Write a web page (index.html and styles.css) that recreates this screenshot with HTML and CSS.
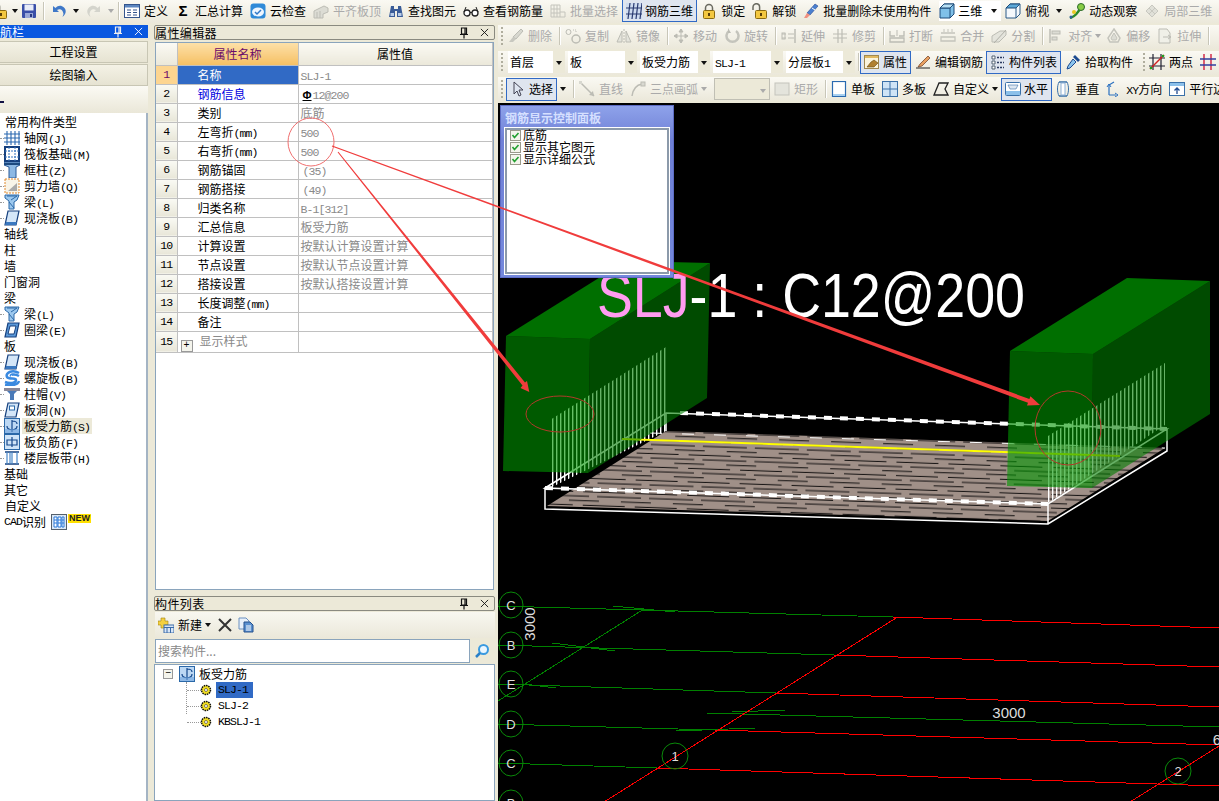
FILE: index.html
```html
<!DOCTYPE html>
<html lang="zh-CN">
<head>
<meta charset="utf-8">
<title>钢筋三维</title>
<link rel="stylesheet" href="styles.css">
</head>
<body>
<svg class="sprite" aria-hidden="true">
  <symbol id="save" viewBox="0 0 16 16"><rect x="1" y="1" width="14" height="14" rx="1" fill="#3a4fa8"/><rect x="3.500" y="1.500" width="9" height="6" fill="#e8ecf8"/><rect x="4" y="10" width="8" height="5" fill="#9aa8d8"/><rect x="9" y="11" width="2" height="3" fill="#2a3a80"/></symbol>
  <symbol id="undo" viewBox="0 0 16 16"><path d="M2 3v6h6L6 7c3-2 6-.5 6.500 4l-1 3c4-3 4-7 1.500-9.500C10 2 7 2.500 4.500 5z" fill="#3f78c8"/></symbol>
  <symbol id="redo" viewBox="0 0 16 16"><path d="M14 3v6H8l2-2C7 5 4 6.500 3.500 11l1 3C.5 11 .5 7 3 4.500 6 2 9 2.500 11.500 5z" fill="#d4d4cc"/></symbol>
  <symbol id="define" viewBox="0 0 16 16"><rect x=".5" y="1.500" width="15" height="13" fill="#fff" stroke="#34558c"/><rect x="1" y="2" width="14" height="2.500" fill="#5c86c0"/><path d="M3 7h4M3 9.500h4M3 12h4M9 7h4M9 9.500h4M9 12h4" stroke="#34558c"/></symbol>
  <symbol id="cloud" viewBox="0 0 16 16"><rect x=".5" y=".5" width="15" height="15" rx="3" fill="#2f8ad8"/><ellipse cx="8" cy="9" rx="6" ry="4.500" fill="#eef6ff"/><path d="M5 9l2 2 4-4" stroke="#2f78c8" stroke-width="1.500" fill="none"/></symbol>
  <symbol id="flat" viewBox="0 0 16 16"><path d="M1 15V8l10-5 4 2v4l-5 2v4z" fill="#dcdcd4" stroke="#bcbcb4"/><path d="M4 15V9M7 15V8" stroke="#bcbcb4"/></symbol>
  <symbol id="binoc" viewBox="0 0 16 16"><path d="M3 3h3v3h4V3h3l2 11H9V8H7v6H1z" fill="#3a5c98"/><rect x="2.500" y="10" width="3.500" height="3" fill="#b8cce8"/><rect x="10" y="10" width="3.500" height="3" fill="#b8cce8"/></symbol>
  <symbol id="glasses" viewBox="0 0 16 16"><circle cx="4" cy="10" r="3" fill="#fff" stroke="#222" stroke-width="1.300"/><circle cx="12" cy="10" r="3" fill="#fff" stroke="#222" stroke-width="1.300"/><path d="M7 9.500h2M1 9l2-5M15 9l-2-5" stroke="#222"/></symbol>
  <symbol id="batch" viewBox="0 0 16 16"><path d="M1 2h9v12H1zM4 2v12M7 2v12M1 6h9M1 10h9M10 9h5v5h-5" fill="none" stroke="#c4c4bc"/></symbol>
  <symbol id="rebar" viewBox="0 0 16 16"><rect width="16" height="16" fill="#cfdcf0"/><path d="M4 0l-2 16M8 0L6 16M12 0l-2 16M16 0l-2 16" stroke="#2a3a70" stroke-width="1.200"/><path d="M0 5h16M0 11h16" stroke="#2a3a70" stroke-width="1.200"/></symbol>
  <symbol id="lock" viewBox="0 0 16 16"><path d="M4.500 8V5a3.500 3.500 0 0 1 7 0v3" fill="none" stroke="#6a6a60" stroke-width="1.500"/><rect x="2.500" y="7.500" width="11" height="8" rx="1" fill="#f4c840" stroke="#8a6a10"/><rect x="7" y="10" width="2" height="3" fill="#5a4008"/></symbol>
  <symbol id="unlock" viewBox="0 0 16 16"><path d="M1 7V4a3.300 3.300 0 0 1 6.600 0v3" fill="none" stroke="#6a6a60" stroke-width="1.500"/><rect x="3.500" y="7.500" width="11" height="8" rx="1" fill="#f4c840" stroke="#8a6a10"/><rect x="8" y="10" width="2" height="3" fill="#5a4008"/></symbol>
  <symbol id="brush" viewBox="0 0 16 16"><path d="M12 1l3 2-8 9-3-2z" fill="#4a80d0" stroke="#2a4a90" stroke-width=".6"/><path d="M4 10l3 2-3 3H1z" fill="#f09080"/><path d="M9 5l3 2" stroke="#fff"/></symbol>
  <symbol id="cube" viewBox="0 0 16 16"><path d="M1 5l4-4h10v10l-4 4H1z" fill="#7fc0e8" stroke="#1c4a78"/><path d="M1 5h10v10M11 5l4-4" fill="none" stroke="#1c4a78"/><path d="M5 1h10l-4 4H1z" fill="#b8e0f4" stroke="#1c4a78"/></symbol>
  <symbol id="cubew" viewBox="0 0 16 16"><path d="M1 5l4-4h10v10l-4 4H1z" fill="#f4f8fc" stroke="#2a5a88"/><path d="M5 1h10l-4 4H1z" fill="#5ca8d8" stroke="#1c4a78"/><path d="M11 5v10M11 5l4-4" stroke="#2a5a88"/></symbol>
  <symbol id="orbit" viewBox="0 0 16 16"><path d="M1 15c4-1 8-5 11-11" stroke="#2a8a2a" stroke-width="2.500" fill="none"/><circle cx="12" cy="4" r="3.500" fill="#88cc44" stroke="#2a6a2a"/><circle cx="5" cy="9" r="2" fill="#e8c820"/><circle cx="2" cy="14" r="1.500" fill="#3060a0"/></symbol>
  <symbol id="part" viewBox="0 0 16 16"><path d="M2 8l6-6 6 6-6 6z" fill="#e0e0d8" stroke="#c8c8c0"/><path d="M5 5l6 6M11 5l-6 6" stroke="#c8c8c0"/></symbol>
  <symbol id="del" viewBox="0 0 16 16"><path d="M13 1l2 2-7 8-3-2z" fill="#d8d8d0" stroke="#bcbcb4"/><path d="M5 9l3 2-3 3H1z" fill="#c8c8c0"/></symbol>
  <symbol id="copy" viewBox="0 0 16 16"><circle cx="3.500" cy="4" r="2.500" fill="none" stroke="#bcbcb4"/><circle cx="11" cy="11" r="4" fill="none" stroke="#bcbcb4" stroke-width="1.500"/><path d="M8 2h3v3" fill="none" stroke="#bcbcb4" stroke-dasharray="1 1"/></symbol>
  <symbol id="mirror" viewBox="0 0 16 16"><path d="M8 1v14" stroke="#bcbcb4" stroke-dasharray="2 1"/><path d="M6 3v11H1zM10 3v11h5z" fill="#e4e4dc" stroke="#bcbcb4"/></symbol>
  <symbol id="move" viewBox="0 0 16 16"><path d="M8 1v14M1 8h14M8 1L6 4h4zM8 15l-2-3h4zM1 8l3-2v4zM15 8l-3-2v4z" stroke="#bcbcb4" fill="#bcbcb4"/></symbol>
  <symbol id="rotate" viewBox="0 0 16 16"><path d="M5 3a6 6 0 1 0 7 0" fill="none" stroke="#c4c4bc" stroke-width="2.500"/><path d="M4 0v5h3z" fill="#bcbcb4"/></symbol>
  <symbol id="extend" viewBox="0 0 16 16"><path d="M14 1v14" stroke="#bcbcb4" stroke-width="1.500"/><path d="M1 6h4M7 6h6M1 10h4M7 10h6" stroke="#bcbcb4"/><rect x="1" y="5" width="3" height="6" fill="none" stroke="#bcbcb4"/></symbol>
  <symbol id="trim" viewBox="0 0 16 16"><path d="M6 1v14M10 1v14" stroke="#bcbcb4" stroke-width="1.200"/><path d="M1 6h14M1 10h14" stroke="#bcbcb4"/></symbol>
  <symbol id="break" viewBox="0 0 16 16"><path d="M1 3v5h5M15 3v5h-5M1 10h14v4H1z" fill="none" stroke="#bcbcb4" stroke-width="1.300"/><path d="M8 2v6" stroke="#bcbcb4"/></symbol>
  <symbol id="merge" viewBox="0 0 16 16"><path d="M1 5h14M1 9h14v4H1z" fill="none" stroke="#c4c4bc" stroke-width="1.300"/><path d="M4 1v3M12 1v3M8 1v3" stroke="#c4c4bc"/></symbol>
  <symbol id="split" viewBox="0 0 16 16"><path d="M1 14V8l8-5h6v4l-7 7z" fill="#e4e4dc" stroke="#bcbcb4"/><path d="M3 15L15 2" stroke="#b0b0a8"/></symbol>
  <symbol id="align" viewBox="0 0 16 16"><path d="M2 1v14" stroke="#bcbcb4" stroke-width="1.500"/><rect x="4" y="3" width="8" height="3" fill="#dcdcd4" stroke="#bcbcb4"/><rect x="4" y="9" width="5" height="3" fill="#dcdcd4" stroke="#bcbcb4"/></symbol>
  <symbol id="offset" viewBox="0 0 16 16"><path d="M8 1l6 9-2 4H4l-2-4z" fill="none" stroke="#c4c4bc" stroke-width="1.500"/><path d="M8 5l3 5-1 2H6l-1-2z" fill="#dcdcd4" stroke="#c4c4bc"/></symbol>
  <symbol id="stretch" viewBox="0 0 16 16"><path d="M2 1h8l3 4v10H2z" fill="#f0f0e8" stroke="#bcbcb4"/><path d="M6 9h7M11 7l3 2-3 2" stroke="#bcbcb4" fill="none"/></symbol>
  <symbol id="prop" viewBox="0 0 16 16"><rect x=".5" y="1.500" width="14" height="13" fill="#fbf4dc" stroke="#a08850"/><rect x="1" y="2" width="13" height="2" fill="#e0b860"/><path d="M3 13l4-5 3-2 4 3-4 4z" fill="#b08030" stroke="#6a4a10" stroke-width=".6"/></symbol>
  <symbol id="edit" viewBox="0 0 16 16"><path d="M1 14h14" stroke="#222"/><path d="M3 13l2-3 8-8 2 2-8 8z" fill="#e8a060" stroke="#6a3a20" stroke-width=".7"/></symbol>
  <symbol id="list" viewBox="0 0 16 16"><path d="M2 2h3v3H2zM2 7h3v3H2zM2 12h3v3H2z" fill="#fff" stroke="#506070"/><path d="M7 3.500h7M7 8.500h7M7 13.500h7" stroke="#2a3a60" stroke-width="1.300" stroke-dasharray="2 1"/></symbol>
  <symbol id="pick" viewBox="0 0 16 16"><path d="M10 1l5 5-2 2-5-5z" fill="#1c4a90"/><path d="M8 5l3 3-6 6-3 1 1-3z" fill="#8cc4ec" stroke="#1c4a90"/></symbol>
  <symbol id="twopt" viewBox="0 0 16 16"><path d="M4 0v16M12 0v16M0 4h16M0 12h16" stroke="#223" stroke-width="1.200"/><path d="M1 15L15 1" stroke="#d02020" stroke-width="1.400"/><circle cx="2" cy="14" r="1.300" fill="#20a020"/><circle cx="14" cy="2" r="1.300" fill="#20a020"/></symbol>
  <symbol id="axis" viewBox="0 0 16 16"><path d="M4 0v16M11 0v16" stroke="#d02040" stroke-width="1.400"/><path d="M0 5h16M0 11h16" stroke="#3040a0" stroke-width="1.400"/></symbol>
  <symbol id="cursor" viewBox="0 0 16 16"><path d="M4 1v12l3-3 2 5 2-1-2-5h4z" fill="#dfe6f2" stroke="#445"/></symbol>
  <symbol id="line" viewBox="0 0 16 16"><path d="M1 1l14 14" stroke="#bcbcb4" stroke-width="1.500"/><rect y="0" width="3" height="3" fill="#d8d8d0"/><path d="M15 15l-5-1 4-4z" fill="#bcbcb4"/></symbol>
  <symbol id="arc" viewBox="0 0 16 16"><path d="M2 15C3 8 6 4 12 3" fill="none" stroke="#bcbcb4" stroke-width="1.500"/><rect x="11" y="1" width="4" height="4" fill="#d8d8d0" stroke="#bcbcb4"/></symbol>
  <symbol id="rect" viewBox="0 0 16 16"><rect x="1" y="2" width="14" height="12" fill="#e4e4dc" stroke="#c4c4bc"/></symbol>
  <symbol id="single" viewBox="0 0 16 16"><rect x="1.500" y=".5" width="13" height="15" fill="#fff" stroke="#2a6ab0" stroke-width="1.200"/><path d="M2 13h12v2H2z" fill="#a8d0f0"/></symbol>
  <symbol id="multi" viewBox="0 0 16 16"><rect x=".5" y=".5" width="15" height="15" fill="#cfe4f6" stroke="#3a70a8"/><path d="M8 0v16M0 8h16" stroke="#3a70a8"/></symbol>
  <symbol id="custom" viewBox="0 0 16 16"><path d="M1 14L6 2h9l-3 6 3 6z" fill="none" stroke="#222" stroke-width="1.300"/></symbol>
  <symbol id="horiz" viewBox="0 0 16 16"><rect x=".5" y="1.500" width="15" height="13" rx="1" fill="#fff" stroke="#3a70a8"/><path d="M1 10h14v4H1z" fill="#8cc0ea"/><path d="M3 4h10l-2 4H5z" fill="#dde6f0" stroke="#3a70a8" stroke-width=".6"/></symbol>
  <symbol id="vert" viewBox="0 0 16 16"><path d="M4 1h8M4 15h8" stroke="#3a70a8" stroke-width="1.500"/><path d="M4 1C2 5 2 11 4 15M12 1c2 4 2 10 0 14" fill="none" stroke="#3a70a8"/><rect x="6" y="2" width="4" height="12" fill="#fff" stroke="#8cb0d8"/></symbol>
  <symbol id="xy" viewBox="0 0 16 16"><path d="M3 14V4l5-3M3 14l7 0" fill="none" stroke="#2a70c0" stroke-width="1.200"/><path d="M1 6l2-3 2 3M9 12l3 2-3 2" fill="none" stroke="#2a70c0"/></symbol>
  <symbol id="par" viewBox="0 0 16 16"><rect x=".5" y="1.500" width="15" height="13" fill="#fff" stroke="#3a70a8"/><rect x="1" y="2" width="14" height="3" fill="#8cc0ea"/><path d="M8 13V7M5.500 9.500L8 7l2.500 2.500" stroke="#204a90" fill="none" stroke-width="1.300"/></symbol>
  <symbol id="n-grid" viewBox="0 0 16 16"><path d="M3 1v14M7 1v14M11 1v14M15 1v14M0 4h16M0 8h16M0 12h16" stroke="#2a68b0" stroke-width="1.100"/></symbol>
  <symbol id="n-raft" viewBox="0 0 16 16"><rect x="1" y="1" width="14" height="14" fill="#fff" stroke="#16407e" stroke-width="2"/><path d="M1 5h14M1 11h14M5 1v14M11 1v14" stroke="#3a78c0" stroke-dasharray="2 1"/></symbol>
  <symbol id="n-col" viewBox="0 0 16 16"><path d="M0 0h16v3l-4 2v11H5V5L0 3z" fill="#8cb8e4" stroke="#2a5a98"/><path d="M0 2h16" stroke="#1c4a80" stroke-width="2"/></symbol>
  <symbol id="n-wall" viewBox="0 0 16 16"><rect x="1" y="1" width="14" height="14" fill="#f8f4e8" stroke="#e08a30" stroke-dasharray="2 1"/><path d="M4 13l9-8v8z" fill="#aaa"/></symbol>
  <symbol id="n-beam" viewBox="0 0 16 16"><path d="M1 1h14l-2 5-3 2v7H5V7L1 4z" fill="#9cc8ee" stroke="#2a68a8"/><path d="M3 2l10 0-6 4M5 8l5 6" stroke="#2a68a8" fill="none"/></symbol>
  <symbol id="n-slab" viewBox="0 0 16 16"><path d="M4 1h11l-3 14H1z" fill="#d4e6f8" stroke="#16407e" stroke-width="1.200"/><path d="M1 15h11l1-3H2z" fill="#3a78c0"/></symbol>
  <symbol id="n-ring" viewBox="0 0 16 16"><path d="M4 1h11l-3 14H1z" fill="#5a98d8" stroke="#16407e" stroke-width="1.200"/><path d="M6 4h6l-2 8H4z" fill="#fff" stroke="#16407e"/></symbol>
  <symbol id="n-spiral" viewBox="0 0 16 16"><path d="M15 3C8-1 1 3 3 7c2 3 9 0 9 3s-6 4-11 2M15 6C10 3 6 5 7 6M1 15c6 1 13 0 14-4" fill="none" stroke="#3a8ae0" stroke-width="2.500"/></symbol>
  <symbol id="n-cap" viewBox="0 0 16 16"><rect y="2" width="16" height="3" fill="#889"/><path d="M3 5h10l-3 3v6H6V8z" fill="#4a7ab8"/></symbol>
  <symbol id="n-hole" viewBox="0 0 16 16"><path d="M4 1h11l-3 14H1z" fill="#d4e6f8" stroke="#16407e" stroke-width="1.200"/><rect x="5.500" y="4" width="5" height="4" fill="#fff" stroke="#2a68a8"/></symbol>
  <symbol id="n-bar" viewBox="0 0 16 16"><rect x=".5" y=".5" width="15" height="15" fill="#bcd8f4" stroke="#2a68a8"/><path d="M8 2v12M3 8c0 5 10 5 10 0M8 3c3 0 5 1 5 3" fill="none" stroke="#14488c" stroke-width="1.200"/><path d="M1 11h14v4H1z" fill="#6ea4dc" opacity=".6"/></symbol>
  <symbol id="n-neg" viewBox="0 0 16 16"><rect x=".5" y=".5" width="15" height="15" fill="#cfe4f8" stroke="#2a68a8"/><path d="M3 6h10v5H3zM8 3v10" fill="none" stroke="#14488c" stroke-width="1.200"/></symbol>
  <symbol id="n-band" viewBox="0 0 16 16"><path d="M1 2h14M1 14h14" stroke="#16407e" stroke-width="1.500"/><path d="M3 2v12M8 2v12M13 2v12M6 2v12" stroke="#4a88c8" stroke-width="1.200"/></symbol>
  <symbol id="n-cad" viewBox="0 0 16 16"><rect x=".5" y=".5" width="15" height="15" fill="#dbe8f6" stroke="#55606c"/><path d="M3 3h3v10H3zM7 3h3v10H7zM11 3h2v10h-2z" fill="#fff" stroke="#2a78d8"/><path d="M3 6h3M3 9h3M7 6h3M7 9h3M11 6h2M11 9h2" stroke="#2a78d8"/></symbol>
  <symbol id="pin" viewBox="0 0 10 12"><path d="M2.500 1h5v6h-5zM1 7.500h8M5 8v3.500M6 1v6" fill="none" stroke="#111" stroke-width="1.200"/></symbol>
  <symbol id="x" viewBox="0 0 10 10"><path d="M1 1l8 8M9 1L1 9" stroke="currentColor"/></symbol>
  <symbol id="plus" viewBox="0 0 16 16"><path d="M3 1h4v3h3v4H7v3H3V8H0V4h3z" fill="#f4d040" stroke="#a08010" stroke-width=".6"/><rect x="6" y="8" width="10" height="8" fill="#d8e6f6" stroke="#3a6aa8"/><path d="M6 10.500h10M9 11v5M12.500 11v5" stroke="#3a6aa8"/></symbol>
  <symbol id="cross" viewBox="0 0 16 16"><path d="M2 2l12 12M14 2L2 14" stroke="#333" stroke-width="2"/></symbol>
  <symbol id="dup" viewBox="0 0 16 16"><path d="M1 1h7l3 3v8H1z" fill="#e8f0fa" stroke="#6a90c0"/><path d="M6 5h6l3 3v7H6z" fill="#5a90d0" stroke="#24508c"/><path d="M8 9h5M8 11h5M8 13h5" stroke="#fff"/></symbol>
  <symbol id="search" viewBox="0 0 16 16"><circle cx="9.500" cy="6.500" r="4.500" fill="#eaf6ff" stroke="#3a9ae0" stroke-width="2"/><path d="M6 10l-4 4" stroke="#2a80c8" stroke-width="2.500"/></symbol>
  <symbol id="gear" viewBox="0 0 12 12"><circle cx="6" cy="6" r="4.500" fill="#f4e020" stroke="#111" stroke-width="1.500" stroke-dasharray="1.500 .8"/><circle cx="6" cy="6" r="1.500" fill="#fff" stroke="#333" stroke-width=".6"/></symbol>
  <symbol id="check" viewBox="0 0 11 11"><rect x=".5" y=".5" width="10" height="10" fill="#f4f4ec" stroke="#9a9a8c"/><path d="M2.500 5l2 2.500 4-4.500" fill="none" stroke="#22a030" stroke-width="1.600"/></symbol>
  <pattern id="hatch" width="52" height="13.500" patternUnits="userSpaceOnUse" patternTransform="rotate(2)"><rect width="52" height="13.500" fill="#a09088"/><path d="M0 2h34M42 2h10M14 6.500h30M28 11h24M0 11h18" stroke="#000" stroke-width=".9"/></pattern>
  <pattern id="bars" width="4" height="4" patternUnits="userSpaceOnUse"><rect width="1.400" height="4" fill="#fff"/></pattern>
</svg>

<div class="app">
  <header class="bar top">
    <svg class="ic clip"><use href="#unlock"/></svg><span class="caret g3"></span>
    <svg class="ic g6"><use href="#save"/></svg><i class="sep"></i>
    <svg class="ic undo"><use href="#undo"/></svg><span class="caret g7"></span>
    <svg class="ic redo"><use href="#redo"/></svg><span class="caret off g4"></span><i class="sep"></i>
    <div class="tool"><svg class="ic"><use href="#define"/></svg>定义</div>
    <div class="tool"><span class="sigma">Σ</span>汇总计算</div>
    <div class="tool"><svg class="ic"><use href="#cloud"/></svg>云检查</div>
    <div class="tool off"><svg class="ic"><use href="#flat"/></svg>平齐板顶</div>
    <div class="tool"><svg class="ic"><use href="#binoc"/></svg>查找图元</div>
    <div class="tool"><svg class="ic"><use href="#glasses"/></svg>查看钢筋量</div>
    <div class="tool off"><svg class="ic"><use href="#batch"/></svg>批量选择</div>
    <div class="tool on"><svg class="ic"><use href="#rebar"/></svg>钢筋三维</div>
    <div class="tool"><svg class="ic"><use href="#lock"/></svg>锁定</div>
    <div class="tool"><svg class="ic"><use href="#unlock"/></svg>解锁</div>
    <div class="tool"><svg class="ic"><use href="#brush"/></svg>批量删除未使用构件</div>
    <div class="view"><svg class="ic"><use href="#cube"/></svg>三维<span class="caret"></span></div>
    <div class="tool"><svg class="ic"><use href="#cubew"/></svg>俯视<span class="caret"></span></div>
    <div class="tool"><svg class="ic"><use href="#orbit"/></svg>动态观察</div>
    <div class="tool off"><svg class="ic"><use href="#part"/></svg>局部三维</div>
  </header>

  <div class="main">
    <aside class="nav">
      <div class="navtitle"><span class="navname">导航栏</span><svg class="pin"><use href="#pin"/></svg><svg class="cl light"><use href="#x"/></svg></div>
      <div class="navbtn">工程设置</div>
      <div class="navbtn">绘图输入</div>
      <div class="navstrip"><i class="dash"></i></div>
      <ul class="tree">
        <li class="head wide">常用构件类型</li>
        <li><svg class="ic"><use href="#n-grid"/></svg><span>轴网<b>(J)</b></span></li>
        <li><svg class="ic"><use href="#n-raft"/></svg><span>筏板基础<b>(M)</b></span></li>
        <li><svg class="ic"><use href="#n-col"/></svg><span>框柱<b>(Z)</b></span></li>
        <li><svg class="ic"><use href="#n-wall"/></svg><span>剪力墙<b>(Q)</b></span></li>
        <li><svg class="ic"><use href="#n-beam"/></svg><span>梁<b>(L)</b></span></li>
        <li><svg class="ic"><use href="#n-slab"/></svg><span>现浇板<b>(B)</b></span></li>
        <li class="head">轴线</li>
        <li class="head">柱</li>
        <li class="head">墙</li>
        <li class="head">门窗洞</li>
        <li class="head">梁</li>
        <li><svg class="ic"><use href="#n-beam"/></svg><span>梁<b>(L)</b></span></li>
        <li><svg class="ic"><use href="#n-ring"/></svg><span>圈梁<b>(E)</b></span></li>
        <li class="head">板</li>
        <li><svg class="ic"><use href="#n-slab"/></svg><span>现浇板<b>(B)</b></span></li>
        <li><svg class="ic"><use href="#n-spiral"/></svg><span>螺旋板<b>(B)</b></span></li>
        <li><svg class="ic"><use href="#n-cap"/></svg><span>柱帽<b>(V)</b></span></li>
        <li><svg class="ic"><use href="#n-hole"/></svg><span>板洞<b>(N)</b></span></li>
        <li><svg class="ic"><use href="#n-bar"/></svg><span class="cur">板受力筋<b>(S)</b></span></li>
        <li><svg class="ic"><use href="#n-neg"/></svg><span>板负筋<b>(F)</b></span></li>
        <li><svg class="ic"><use href="#n-band"/></svg><span>楼层板带<b>(H)</b></span></li>
        <li class="head">基础</li>
        <li class="head">其它</li>
        <li class="head wide">自定义</li>
        <li class="head cad"><b>CAD</b>识别<svg class="ic"><use href="#n-cad"/></svg><em class="new">NEW</em></li>
      </ul>
    </aside>

    <section class="mid">
      <div class="ptitle">属性编辑器<svg class="pin"><use href="#pin"/></svg><svg class="cl"><use href="#x"/></svg></div>
      <div class="gridwrap">
        <table class="props">
          <colgroup><col class="c0"><col class="c1"><col class="c2"></colgroup>
          <thead><tr><th></th><th class="hot">属性名称</th><th>属性值</th></tr></thead>
          <tbody>
            <tr class="sel"><th>1</th><td>名称</td><td class="v"><b>SLJ-1</b></td></tr>
            <tr><th>2</th><td class="link">钢筋信息</td><td class="v"><span class="grade">Φ</span><b>12@200</b></td></tr>
            <tr><th>3</th><td>类别</td><td class="v">底筋</td></tr>
            <tr><th>4</th><td>左弯折<b>(mm)</b></td><td class="v"><b>500</b></td></tr>
            <tr><th>5</th><td>右弯折<b>(mm)</b></td><td class="v"><b>500</b></td></tr>
            <tr><th>6</th><td>钢筋锚固</td><td class="v"><b class="ind">(35)</b></td></tr>
            <tr><th>7</th><td>钢筋搭接</td><td class="v"><b class="ind">(49)</b></td></tr>
            <tr><th>8</th><td>归类名称</td><td class="v"><b>B-1[312]</b></td></tr>
            <tr><th>9</th><td>汇总信息</td><td class="v">板受力筋</td></tr>
            <tr><th>10</th><td>计算设置</td><td class="v">按默认计算设置计算</td></tr>
            <tr><th>11</th><td>节点设置</td><td class="v">按默认节点设置计算</td></tr>
            <tr><th>12</th><td>搭接设置</td><td class="v">按默认搭接设置计算</td></tr>
            <tr><th>13</th><td>长度调整<b>(mm)</b></td><td class="v"></td></tr>
            <tr><th>14</th><td>备注</td><td class="v"></td></tr>
            <tr><th>15</th><td class="grp"><span class="box">+</span>显示样式</td><td class="v"></td></tr>
          </tbody>
        </table>
      </div>
      <div class="ptitle second">构件列表<svg class="pin"><use href="#pin"/></svg><svg class="cl"><use href="#x"/></svg></div>
      <div class="listbar">
        <svg class="ic"><use href="#plus"/></svg><span class="newbtn">新建</span><span class="caret"></span>
        <svg class="ic"><use href="#cross"/></svg><svg class="ic"><use href="#dup"/></svg>
      </div>
      <div class="searchrow"><div class="searchbox">搜索构件...</div><div class="searchbtn"><svg class="ic"><use href="#search"/></svg></div></div>
      <div class="complist">
        <div class="root"><span class="box">−</span><svg class="ic"><use href="#n-bar"/></svg>板受力筋</div>
        <div class="kids">
          <div class="kid"><svg class="gear"><use href="#gear"/></svg><span class="pick">SLJ-1</span></div>
          <div class="kid"><svg class="gear"><use href="#gear"/></svg><span>SLJ-2</span></div>
          <div class="kid"><svg class="gear"><use href="#gear"/></svg><span>KBSLJ-1</span></div>
        </div>
      </div>
    </section>

    <section class="right">
      <div class="bar row lift">
        <i class="grip"></i>
        <div class="tool off"><svg class="ic"><use href="#del"/></svg>删除</div><i class="sep"></i>
        <div class="tool off"><svg class="ic"><use href="#copy"/></svg>复制</div>
        <div class="tool off"><svg class="ic"><use href="#mirror"/></svg>镜像</div><i class="sep"></i>
        <div class="tool off"><svg class="ic"><use href="#move"/></svg>移动</div>
        <div class="tool off"><svg class="ic"><use href="#rotate"/></svg>旋转</div><i class="sep"></i>
        <div class="tool off"><svg class="ic"><use href="#extend"/></svg>延伸</div>
        <div class="tool off"><svg class="ic"><use href="#trim"/></svg>修剪</div><i class="sep"></i>
        <div class="tool off"><svg class="ic"><use href="#break"/></svg>打断</div>
        <div class="tool off"><svg class="ic"><use href="#merge"/></svg>合并</div>
        <div class="tool off"><svg class="ic"><use href="#split"/></svg>分割</div><i class="sep"></i>
        <div class="tool off"><svg class="ic"><use href="#align"/></svg>对齐<span class="caret off"></span></div>
        <div class="tool off"><svg class="ic"><use href="#offset"/></svg>偏移</div>
        <div class="tool off"><svg class="ic"><use href="#stretch"/></svg>拉伸</div><i class="sep"></i>
      </div>
      <div class="bar row lift">
        <i class="grip"></i>
        <div class="combo w57"><span>首层</span></div>
        <div class="combo w69"><span>板</span></div>
        <div class="combo w70"><span>板受力筋</span></div>
        <div class="combo w70"><span><b>SLJ-1</b></span></div>
        <div class="combo w69"><span>分层板<b>1</b></span></div>
        <i class="sep first"></i>
        <div class="tool on"><svg class="ic"><use href="#prop"/></svg>属性</div>
        <div class="tool snug"><svg class="ic"><use href="#edit"/></svg>编辑钢筋</div>
        <div class="tool on"><svg class="ic"><use href="#list"/></svg>构件列表</div>
        <div class="tool"><svg class="ic"><use href="#pick"/></svg>拾取构件</div>
        <i class="grip wide"></i>
        <div class="tool"><svg class="ic"><use href="#twopt"/></svg>两点</div>
        <svg class="ic"><use href="#axis"/></svg>
      </div>
      <div class="bar row">
        <i class="grip"></i>
        <div class="tool on slim lead"><svg class="ic"><use href="#cursor"/></svg>选择</div><span class="caret g7"></span><i class="sep"></i>
        <div class="tool off"><svg class="ic"><use href="#line"/></svg>直线</div>
        <div class="tool off"><svg class="ic"><use href="#arc"/></svg>三点画弧<span class="caret off"></span></div>
        <div class="combo dis"></div>
        <div class="tool off"><svg class="ic"><use href="#rect"/></svg>矩形</div><i class="sep"></i>
        <div class="tool"><svg class="ic"><use href="#single"/></svg>单板</div>
        <div class="tool"><svg class="ic"><use href="#multi"/></svg>多板</div>
        <div class="tool tight"><svg class="ic"><use href="#custom"/></svg>自定义<span class="caret"></span></div>
        <div class="tool on slim"><svg class="ic"><use href="#horiz"/></svg>水平</div>
        <div class="tool"><svg class="ic"><use href="#vert"/></svg>垂直</div>
        <div class="tool"><svg class="ic"><use href="#xy"/></svg><span><b>XY</b>方向</span></div>
        <div class="tool"><svg class="ic"><use href="#par"/></svg>平行边</div>
      </div>

      <div class="canvas">
        <svg class="scene" viewBox="498 102 721 699">
          <polygon points="547,505 666,430 1165,447 1048,520" fill="url(#hatch)"/>
          <polygon points="550,419 666,346 666,430 550,487" fill="url(#bars)"/>
          <polygon points="1048,435 1165,362 1165,424 1048,502" fill="url(#bars)"/>
          <g class="wire">
            <path d="M545 487V508L1048 523L1167 450V428M1048 503V523M666 412V430"/>
            <path d="M545 487L666 412L1167 428L1048 503Z"/>
          </g>
          <g class="beads">
            <path d="M545 487L1048 503M680 412L1167 428"/>
          </g>
          <path class="thin" d="M650 432L1165 447"/>
          <path class="beam" d="M622 438L1120 455"/>
          <g class="block">
            <polygon class="front" points="506,335 590,338 588,472 503,470"/>
            <polygon class="side" points="590,338 710,262 707,397 588,472"/>
            <polygon class="topf" points="506,335 590,338 710,262 626,260"/>
            <polygon class="front" points="1010,350 1093,353 1092,487 1007,485"/>
            <polygon class="side" points="1093,353 1210,280 1210,413 1092,487"/>
            <polygon class="topf" points="1010,350 1093,353 1210,280 1127,277"/>
          </g>
          <ellipse class="mark" cx="560" cy="413" rx="34" ry="18"/>
          <ellipse class="mark" cx="1068" cy="427" rx="33" ry="37"/>
          <text class="title" x="597" y="316" textLength="428" lengthAdjust="spacingAndGlyphs"><tspan class="pink">SLJ</tspan>-1 : C12@200</text>

          <g class="g-line">
            <path d="M498 605L893 616M498 644L834 654M498 683L776 692M706 712L1219 726M498 723L714 729M498 762L657 767"/>
            <path d="M498 700L644 608M613 605L675 611M552 642L615 650M524 683L556 687M732 711L785 709M676 730L755 727"/>
          </g>
          <g class="r-line">
            <path d="M893 616L1219 627M834 654L1219 666M776 692L1219 706M714 729L1219 744M657 767L1219 785M604 801L896 617M1130 801L1219 745"/>
          </g>
          <g class="bubble">
            <ellipse cx="511" cy="604" rx="12" ry="13"/><ellipse cx="511" cy="644" rx="12" ry="13"/><ellipse cx="511" cy="683" rx="12" ry="13"/>
            <ellipse cx="511" cy="723" rx="12" ry="13"/><ellipse cx="511" cy="762" rx="12" ry="13"/><ellipse cx="511" cy="802" rx="12" ry="13"/>
            <ellipse cx="675" cy="755" rx="13" ry="13"/><ellipse cx="1178" cy="770" rx="13" ry="13"/>
          </g>
          <g class="axisname">
            <text x="511" y="609">C</text><text x="511" y="649">B</text><text x="511" y="688">E</text>
            <text x="511" y="728">D</text><text x="511" y="767">C</text><text x="511" y="807">B</text>
            <text x="675" y="760">1</text><text x="1178" y="775">2</text>
          </g>
          <g class="dim">
            <text x="1009" y="717">3000</text>
            <text x="1217" y="744">6</text>
            <text class="turned" x="535" y="623">3000</text>
          </g>
        </svg>
        <div class="float">
          <div class="floathead">钢筋显示控制面板</div>
          <div class="floatbody">
            <label class="opt"><svg class="chk"><use href="#check"/></svg>底筋</label>
            <label class="opt"><svg class="chk"><use href="#check"/></svg>显示其它图元</label>
            <label class="opt"><svg class="chk"><use href="#check"/></svg>显示详细公式</label>
          </div>
        </div>
      </div>
    </section>
  </div>

  <svg class="overlay" viewBox="0 0 1219 801">
    <ellipse cx="311" cy="142" rx="23" ry="24" class="ring"/>
    <polygon class="arrow" points="332.200,145.500 1029.400,399 1030.400,396.200 1040,405 1027,405.600 1028,402.800 331.800,146.500"/>
    <polygon class="arrow" points="338.400,151.700 525,382.500 527,381 529.300,392 520.500,388 522.500,385.500 337.600,152.300"/>
  </svg>
</div>
</body>
</html>
```

FILE: styles.css
```css
* { box-sizing: border-box; }
html, body { margin: 0; padding: 0; }
body {
  width: 1219px; height: 801px; overflow: hidden;
  background: #ece9d8; color: #000;
  font: 12px/16px "Noto Sans CJK SC", "Liberation Sans", sans-serif;
}
.sprite { position: absolute; width: 0; height: 0; }
.app { position: relative; width: 1219px; height: 801px; overflow: hidden; }
b { font: 11.500px/1 "Liberation Mono", monospace; letter-spacing: -.9px; }

/* toolbars */
.bar { display: flex; align-items: center; white-space: nowrap; background: linear-gradient(#faf9f3, #ebe8da); }
.top { height: 23px; padding-bottom: 2px; }
.row { height: 24px; margin-bottom: 2px; }
.row:nth-child(3) { margin-bottom: 1px; }
.lift { padding-bottom: 2px; }
.ic { width: 16px; height: 16px; flex: none; display: block; }
.clip { margin-left: -8px; margin-right: 1px; }
.undo { margin-left: 7px; margin-right: 3px; }
.redo { margin-right: 3px; }
.g3 { margin-right: 3px; }
.g4 { margin-right: 4px; }
.g6 { margin-right: 6px; }
.g7 { margin-right: 7px; }
.tool { display: flex; align-items: center; gap: 4px; height: 22px; margin-right: 7px; flex: none; }
.tool.tight { margin-right: 5px; }
.tool.snug { margin-right: 3px; }
.off { color: #aaa; }
.on { border: 1px solid #316ac5; background: #dfe5ef; padding: 0 3px; gap: 3px; margin-right: 4px; height: 23px; }
.top .on { margin-left: -3px; }
.slim { margin-right: 3px; }
.lead { margin-left: -2px; }
.sep { width: 1px; height: 18px; background: #c8c6b8; box-shadow: 1px 0 #fff; margin-right: 5px; flex: none; }
.sep.first { margin-left: 0; margin-right: 1px; }
.top > .sep:nth-of-type(1) { margin-right: 0; }
.grip { width: 2px; height: 18px; margin: 0 5px 0 3px; flex: none; border-left: 2px dotted #b0ae9e; }
.grip.wide { margin-left: 3px; margin-right: 4px; }
.caret { display: inline-block; width: 0; height: 0; flex: none; border: 3px solid transparent; border-top: 4px solid #111; border-bottom: 0; margin-left: 3px; }
.caret.off { border-top-color: #aaa; }
.right .tool .caret { margin-left: -1px; margin-right: -2px; }
.row .g7 { margin-left: 0; }
.sigma { width: 16px; text-align: center; font: bold 15px/16px "Liberation Sans", sans-serif; }
.view { display: flex; align-items: center; gap: 3px; height: 20px; width: 62px; margin-left: 1px; background: #fff; margin-right: 4px; flex: none; }
.view .caret { margin-left: 6px; }

.combo { display: flex; align-items: center; height: 22px; background: #fff; margin-right: 3px; padding-left: 2px; position: relative; flex: none; }
.combo::after { content: ""; position: absolute; right: 0; top: 0; bottom: 0; width: 12px; background: #ece9d8; }
.combo::before { content: ""; position: absolute; right: 3px; top: 10px; z-index: 1; border: 3px solid transparent; border-top: 4px solid #111; border-bottom: 0; }
.w57 { width: 57px; }
.w69 { width: 69px; }
.w70 { width: 70px; }
.dis { width: 56px; border: 1px solid #c0bfb4; margin: 0 4px 0 2px; background: #ece9d8; }
.dis::before { border-top-color: #aaa; }

/* nav */
.main { display: flex; height: 778px; padding-top: 2px; }
.nav { width: 148px; flex: none; margin-right: 5px; display: flex; flex-direction: column; }
.navtitle { height: 13px; background: #0a58e0; color: #fff; display: flex; align-items: center; overflow: hidden; line-height: 13px; font-size: 12px; }
.navname { margin-left: -12px; flex: 1; }
.pin { width: 10px; height: 12px; flex: none; }
.navtitle .pin { margin-right: 11px; filter: invert(1); }
.cl { width: 9px; height: 9px; margin: 0 5px 0 0; flex: none; color: #111; }
.cl.light { color: #fff; }
.navbtn { height: 22px; margin-top: 1px; text-align: center; line-height: 20px; background: linear-gradient(#f4f2e6, #e6e3d2); border: 1px solid #c8c6b4; border-left: 0; font-size: 12px; }
.navbtn:nth-child(2) { margin-top: 3px; }
.navstrip { height: 27px; background: linear-gradient(#fbfaf4, #eae7d8); position: relative; }
.dash { position: absolute; left: 0; top: 15px; width: 4px; height: 2px; background: #114; }
.tree { list-style: none; margin: 0; padding: 1px 0 0; flex: 1; background: #fff; border-right: 2px solid #a4b4c4; }
.tree li { height: 16px; display: flex; align-items: center; gap: 4px; }
.tree li:not(.head)::before { content: ""; width: 4px; border-top: 1px dotted #999; flex: none; margin-right: -4px; }
.tree .head { padding-left: 4px; }
.tree .wide { padding-left: 5px; }
.tree .cur { background: #ece9d8; margin-left: -2px; padding: 0 2px; }
.cad { gap: 0 !important; }
.cad .ic { margin-left: 5px; }
.new { font: bold 9px/9px "Liberation Sans", sans-serif; background: #ffe000; color: #222; align-self: flex-start; padding: 0 1px; margin-left: 1px; }

/* middle */
.mid { width: 342px; flex: none; margin-right: 3px; display: flex; flex-direction: column; }
.ptitle { height: 15px; margin-left: 1px; border: 1px solid #8a8a80; border-radius: 2px; display: flex; align-items: center; line-height: 13px; font-size: 12px; letter-spacing: .4px; background: #ece9d8; }
.ptitle .pin { margin-left: auto; margin-right: 11px; }
.ptitle .cl { margin-right: 5px; }
.gridwrap { height: 548px; margin: 2px 0 0 2px; width: 339px; background: #fff; border: 1px solid #8aa4bc; }
.props { border-collapse: collapse; table-layout: fixed; width: 336px; font-size: 12px; }
.c0 { width: 21px; }
.c1 { width: 121px; }
.c2 { width: 194px; }
.props tr { height: 19px; }
.props thead tr { height: 22px; }
.props th, .props td { padding: 0; border: 1px solid #c0c0c0; border-left: 0; border-top: 0; overflow: hidden; white-space: nowrap; height: 19px; line-height: 17px; }
.props thead th { font-weight: 400; background: linear-gradient(#fbfaf4, #ebe8da); height: 22px; font-size: 12px; }
.props thead th.hot { background: linear-gradient(#fde0a8, #f5c064); color: #6a0a6a; }
.props tbody th { font: 11.500px/17px "Liberation Mono", monospace; letter-spacing: -.9px; background: linear-gradient(#fafaf4, #e8e6d8); }
.props tbody td { padding-left: 20px; }
.props tbody td.v { padding-left: 2px; color: #8a8a8a; }
.sel th { background: #fdd590 !important; color: #6a0a6a; }
.sel td:nth-child(2) { background: #316ac5; color: #fff; }
.link { color: #0000e0; }
.grade { font: bold 11px/1 "Liberation Sans", sans-serif; color: #000; text-decoration: underline; margin: 0 1px 0 2px; }
.ind { margin-left: 2px; }
.box { display: inline-block; width: 10px; height: 10px; border: 1px solid #999; background: #f4f4ec; font: 10px/8px "Liberation Mono", monospace; text-align: center; color: #000; }
.grp { color: #8a8a8a; }
.props td.grp { padding-left: 3px; }
.grp .box { margin-right: 7px; width: 12px; height: 12px; line-height: 10px; vertical-align: -2px; }
.second { margin-top: 6px; }
.listbar { height: 26px; display: flex; align-items: center; margin: 1px 0 0 2px; padding-left: 3px; background: linear-gradient(#f8f7f0, #ebe8da); }
.newbtn { margin-left: 4px; }
.listbar .caret { margin-right: 6px; }
.listbar .ic + .ic { margin-left: 5px; }
.searchrow { display: flex; height: 24px; margin: 1px 0 0 2px; width: 339px; }
.searchbox { width: 315px; background: #fff; border: 1px solid #8aa4bc; color: #888; padding-left: 2px; line-height: 22px; font-size: 12px; }
.searchbtn { flex: 1; display: flex; align-items: center; justify-content: center; }
.complist { flex: 1; margin: 1px 0 0 1px; width: 341px; background: #fff; border: 1px solid #8aa4bc; padding-top: 1px; }
.root { display: flex; align-items: center; height: 16px; margin-top: 0; padding-left: 8px; gap: 6px; }
.root .ic { margin-right: -2px; }
.root .box { line-height: 8px; }
.kids { margin-left: 31px; border-left: 1px dotted #999; height: 32px; position: relative; }
.kid { height: 16px; display: flex; align-items: center; font: 11.500px/16px "Liberation Mono", monospace; letter-spacing: -.9px; white-space: nowrap; }
.kid::before { content: ""; width: 14px; border-top: 1px dotted #999; flex: none; }
.gear { width: 12px; height: 12px; flex: none; margin-right: 4px; margin-left: -1px; }
.kid span { padding: 0 2px; line-height: 16px; }
.pick { background: #316ac5; padding: 0 4px 0 2px !important; width: 37px; }

/* canvas */
.right { flex: 1; min-width: 0; display: flex; flex-direction: column; }
.canvas { position: relative; margin-top: 1px; flex: 1; background: #000; overflow: hidden; }
.scene { display: block; width: 721px; height: 699px; }
.wire path { fill: none; stroke: #fff; stroke-width: 1.500; }
.beads path { fill: none; stroke: #fff; stroke-width: 4; stroke-dasharray: 8 8; }
.thin { fill: none; stroke: #fff; stroke-dasharray: 12 20; }
.beam { fill: none; stroke: #ffff00; stroke-width: 2; }
.front { fill: rgba(0, 150, 0, .6); }
.side { fill: rgba(0, 125, 0, .6); }
.topf { fill: rgba(0, 185, 0, .6); }
.mark { fill: none; stroke: #b23a2a; stroke-width: 1; }
.title { font: 63px "Liberation Sans", sans-serif; fill: #fff; }
.pink { fill: #ff9cf0; }
.g-line path { fill: none; stroke: #008000; shape-rendering: crispEdges; }
.r-line path { fill: none; stroke: #ff0000; shape-rendering: crispEdges; }
.bubble ellipse { fill: none; stroke: #0a8a0a; }
.axisname text { font: 13px "Liberation Sans", sans-serif; fill: #ddd; text-anchor: middle; }
.dim text { font: 15px "Liberation Sans", sans-serif; fill: #ddd; text-anchor: middle; }
.dim .turned { transform: rotate(-90deg); transform-origin: 535px 623px; }
.float { position: absolute; left: 2px; top: 2px; width: 174px; height: 173px; padding: 3px 4px; background: linear-gradient(#8ea2ea, #6f80d6 20%, #7488dc); border: 1px solid #5d6cc4; }
.floathead { height: 19px; color: #d6e0ff; font-weight: 700; font-size: 12px; line-height: 17px; }
.floatbody { height: 146px; background: #fff; border: 2px solid #8c9aaa; outline: 1px solid #fff; }
.opt { display: flex; align-items: center; gap: 2px; height: 12px; line-height: 12px; padding-left: 3px; position: relative; top: -1px; }
.chk { width: 11px; height: 11px; flex: none; }

.overlay { position: absolute; left: 0; top: 0; width: 1219px; height: 801px; pointer-events: none; }
.ring { fill: none; stroke: #f07070; stroke-width: 1; }
.arrow { fill: #f03c3c; }
```
